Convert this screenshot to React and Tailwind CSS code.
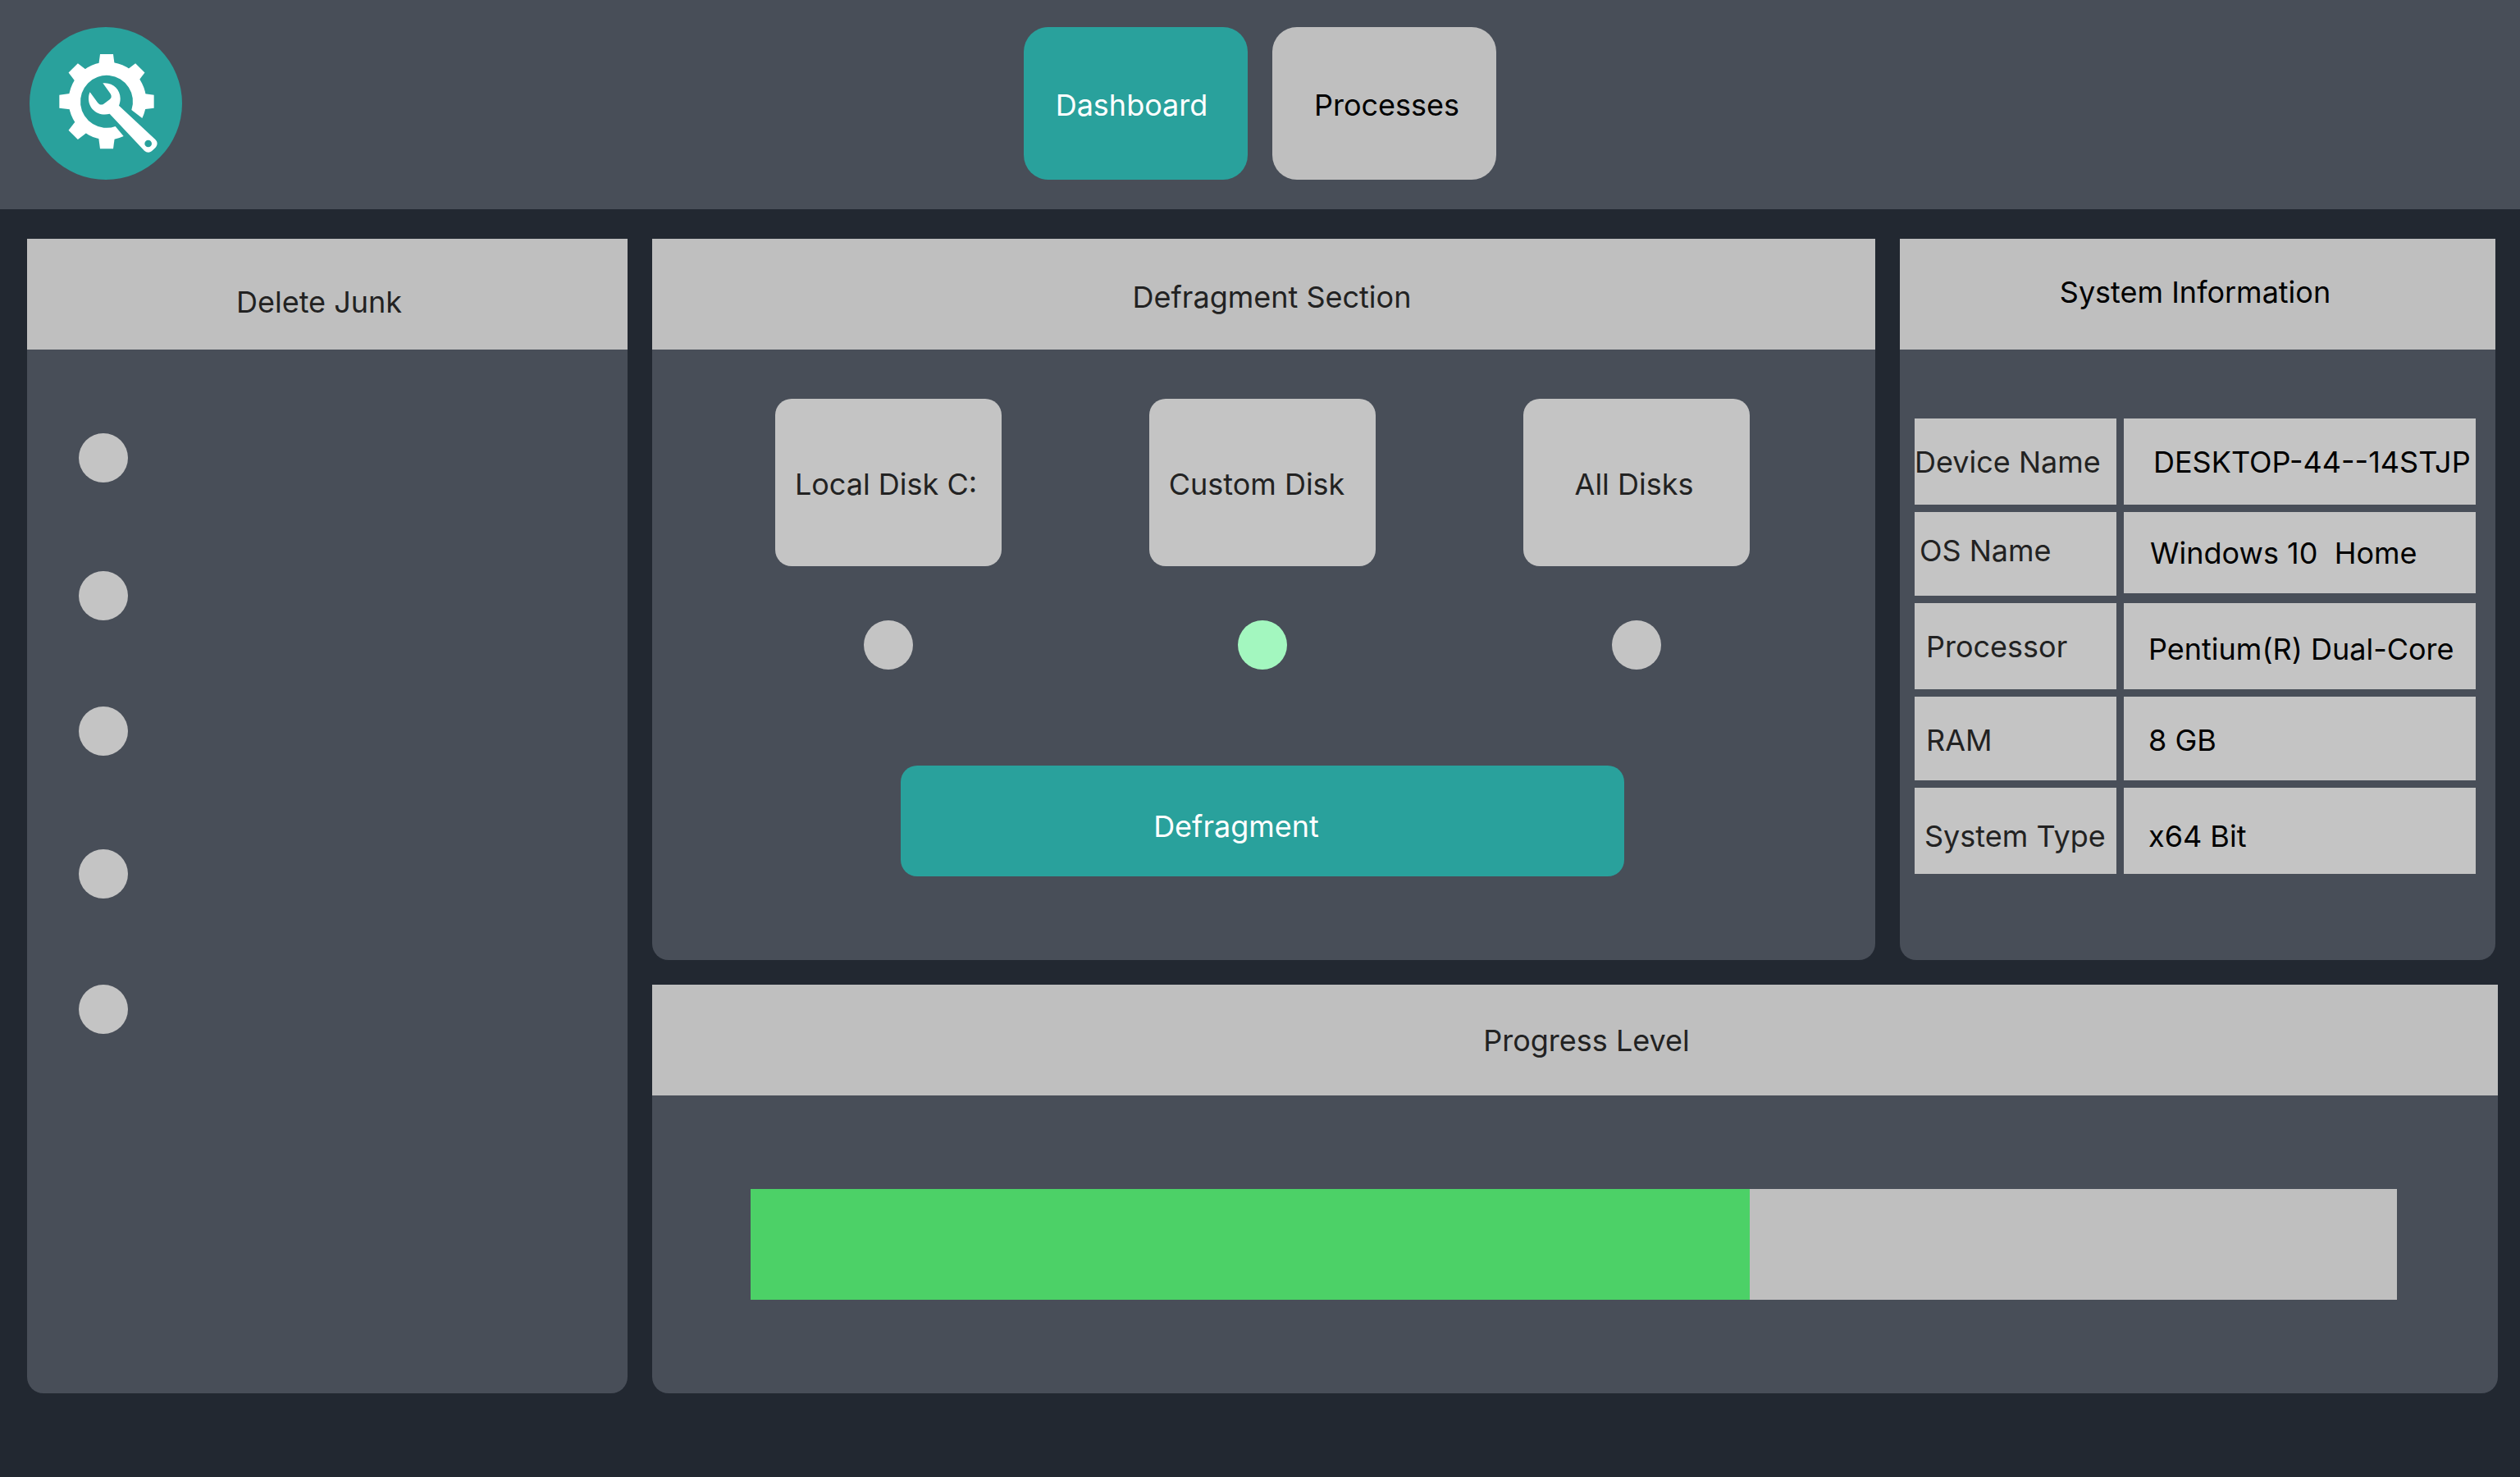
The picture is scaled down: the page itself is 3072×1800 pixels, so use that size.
const SANS = "font-['Inter',sans-serif]";

const junkItems = [
  { name: "Junk item 1", gap: "" },
  { name: "Junk item 2", gap: "mt-[108px]" },
  { name: "Junk item 3", gap: "mt-[105px]" },
  { name: "Junk item 4", gap: "mt-[114px]" },
  { name: "Junk item 5", gap: "mt-[105px]" },
];

const disks = [
  { id: "local", label: "Local Disk C:", pad: "pr-1.5" },
  { id: "custom", label: "Custom Disk", pad: "pr-3.5" },
  { id: "all", label: "All Disks", pad: "pr-1.5" },
];

const systemInfo = [
  { label: "Device Name", value: "DESKTOP-44--14STJP", row: "h-[105px]", th: "", td: "pl-9" },
  { label: "OS Name", value: "Windows 10  Home", row: "h-[102px]", th: "pl-1.5 pb-2", td: "pl-8 border-b-3 border-[#484e58]" },
  { label: "Processor", value: "Pentium(R) Dual-Core", row: "h-[105px]", th: "pl-3.5", td: "pl-7.5 pt-1.5" },
  { label: "RAM", value: "8 GB", row: "h-[102px]", th: "pl-3.5 pt-1", td: "pl-7.5 pt-1" },
  { label: "System Type", value: "x64 Bit", row: "h-[105px]", th: "pl-3 pt-3", td: "pl-7.5 pt-3" },
];

const gearTeeth = [0, 45, 90, 180, 225, 270, 315];

function Logo() {
  return (
    <svg viewBox="0 0 558 558" className="size-[186px] shrink-0" role="img" aria-label="System tools">
      <circle cx="279" cy="279" r="279" fill="#29a19c" />
      <g transform="translate(-108 -99)" fill="#fff">
        <path d="M520 432A142 142 0 1 0 452 498L422 462A96 96 0 1 1 481 402Z" />
        {gearTeeth.map((angle) => (
          <path key={angle} d="M366 198H414L419 236H361Z" transform={`rotate(${angle} 390 371)`} />
        ))}
        <path
          fillRule="evenodd"
          d="M376 304C411 299 440 326 440 360C440 370 438 378 435 386L568 510C577 519 577 530 569 539L558 550C549 559 537 559 528 551L401 416C359 427 323 398 324 359C324 350 326 343 329 337L357 375C363 383 371 385 379 380L401 364C408 359 409 351 404 343ZM542 512A13 13 0 1 0 542 538A13 13 0 1 0 542 512Z"
        />
      </g>
    </svg>
  );
}

function Panel({ title, titleClass, className, children }) {
  return (
    <section className={`flex flex-col overflow-hidden rounded-b-[20px] bg-[#484e58] ${className}`}>
      <h2 className={`flex h-[135px] shrink-0 items-center justify-center bg-[#bfbfbf] ${titleClass}`}>{title}</h2>
      {children}
    </section>
  );
}

export default function App() {
  return (
    <div className={`min-h-screen bg-[#222831] text-[36px] leading-[44px] text-[#222222] ${SANS}`}>
      <header className="grid h-[255px] grid-cols-[1fr_auto_1fr] items-center bg-[#484e58] px-9 pb-[3px]">
        <Logo />
        <nav className="flex gap-[30px]">
          <button type="button" className="h-[186px] w-[273px] rounded-[30px] bg-[#29a19c] pt-1 pr-2.5 text-white">
            Dashboard
          </button>
          <button type="button" className="h-[186px] w-[273px] rounded-[30px] bg-[#bfbfbf] pt-1 pl-1.5 text-black">
            Processes
          </button>
        </nav>
      </header>

      <main className="grid grid-cols-[732fr_1491fr_726fr] gap-[30px] pt-9 pr-[30px] pb-[102px] pl-[33px]">
        <Panel title="Delete Junk" titleClass="pt-[18px] pr-5" className="row-span-2">
          <ul className="flex flex-col pt-[102px] pl-[63px]">
            {junkItems.map((item) => (
              <li key={item.name} className={`flex ${item.gap}`}>
                <input
                  type="checkbox"
                  aria-label={item.name}
                  className="size-[60px] appearance-none rounded-full bg-[#c4c4c4] checked:bg-[#a3f7bf]"
                />
              </li>
            ))}
          </ul>
        </Panel>

        <Panel title="Defragment Section" titleClass="pt-1.5 pl-5" className="pb-[102px]">
          <div className="flex justify-center gap-[180px] pt-[60px] pr-[3px]">
            {disks.map((disk) => (
              <div key={disk.id} className="flex flex-col items-center gap-[66px]">
                <label
                  htmlFor={disk.id}
                  className={`flex h-[204px] w-[276px] items-center justify-center rounded-[20px] bg-[#c4c4c4] pt-1 ${disk.pad}`}
                >
                  {disk.label}
                </label>
                <input
                  id={disk.id}
                  type="radio"
                  name="disk"
                  defaultChecked={disk.id === "custom"}
                  className="size-[60px] appearance-none rounded-full bg-[#c4c4c4] checked:bg-[#a3f7bf]"
                />
              </div>
            ))}
          </div>
          <div className="flex justify-center pt-[117px] pr-[3px]">
            <button type="button" className="h-[135px] w-[882px] rounded-[20px] bg-[#29a19c] pt-3 pr-16 text-white">
              Defragment
            </button>
          </div>
        </Panel>

        <Panel title="System Information" titleClass="pr-1.5 pb-1.5 text-black" className="">
          <table className="mt-[75px] mr-[15px] ml-[9px] border-separate border-spacing-[9px]">
            <tbody>
              {systemInfo.map((item) => (
                <tr key={item.label} className={item.row}>
                  <th scope="row" className={`w-[246px] bg-[#c4c4c4] text-left font-normal whitespace-nowrap ${item.th}`}>
                    {item.label}
                  </th>
                  <td className={`bg-[#c4c4c4] whitespace-pre text-black ${item.td}`}>{item.value}</td>
                </tr>
              ))}
            </tbody>
          </table>
        </Panel>

        <Panel title="Progress Level" titleClass="pl-7" className="col-span-2 -mr-[3px]">
          <div
            role="progressbar"
            aria-label="Progress Level"
            aria-valuenow={61}
            aria-valuemin={0}
            aria-valuemax={100}
            className="mt-[114px] mr-[123px] mb-[114px] ml-[120px] h-[135px] bg-[#bfbfbf]"
          >
            <div className="h-full bg-[#4cd167]" style={{ width: "60.7%" }} />
          </div>
        </Panel>
      </main>
    </div>
  );
}
